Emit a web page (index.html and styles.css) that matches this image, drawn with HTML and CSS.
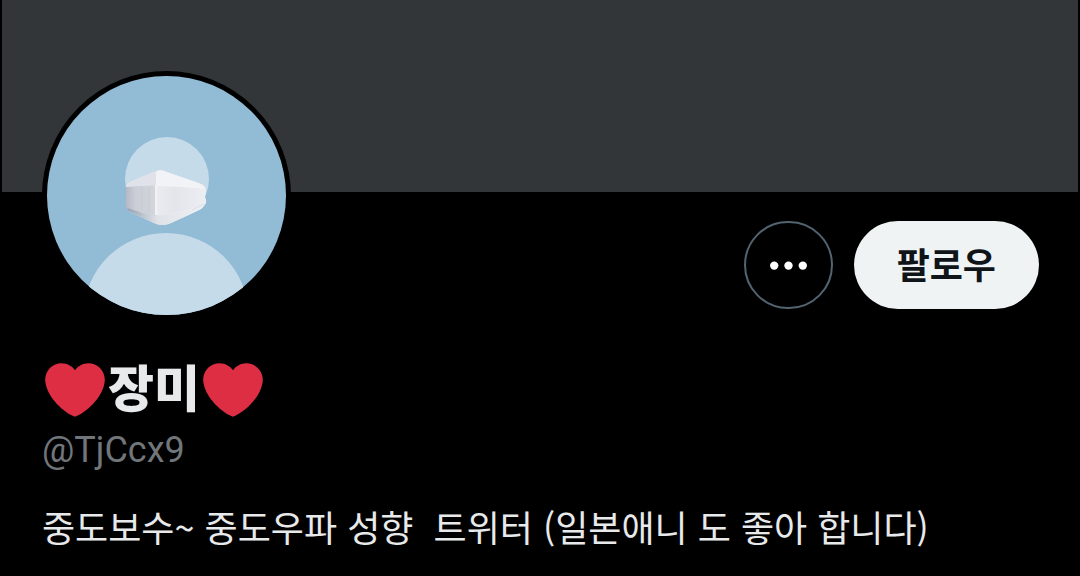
FILE: index.html
```html
<!DOCTYPE html>
<html lang="ko">
<head>
    <meta charset="UTF-8">
    <meta name="viewport" content="width=device-width, initial-scale=1.0">
    <title>장미 (@TjCcx9)</title>
    <link rel="stylesheet" href="styles.css">
</head>
<body>
    <div class="banner"></div>
    <main class="profile">
        <div class="profile-top">
            <svg class="avatar" viewBox="0 0 239 239" role="img" aria-label="프로필 사진">
                <defs>
                    <linearGradient id="maskLeft" x1="0" y1="0" x2="1" y2="0">
                        <stop offset="0" stop-color="#b4b9c4"/>
                        <stop offset="0.3" stop-color="#cbced6"/>
                        <stop offset="1" stop-color="#d3d5dc"/>
                    </linearGradient>
                    <linearGradient id="maskRight" x1="0" y1="0" x2="1" y2="0">
                        <stop offset="0" stop-color="#ebecf0"/>
                        <stop offset="0.4" stop-color="#e3e5eb"/>
                        <stop offset="1" stop-color="#eceef2"/>
                    </linearGradient>
                    <linearGradient id="maskBottom" x1="0" y1="0" x2="1" y2="0">
                        <stop offset="0" stop-color="#93a1b0"/>
                        <stop offset="0.4" stop-color="#dfe2e7"/>
                        <stop offset="1" stop-color="#eef0f3"/>
                    </linearGradient>
                </defs>
                <rect width="239" height="239" fill="#92bbd6"/>
                <circle cx="120" cy="103" r="42" fill="#c5dbe9"/>
                <ellipse cx="119" cy="238" rx="82" ry="81" fill="#c5dbe9"/>
                <!-- mask -->
                <path d="M79 111Q80 107 85 105L107 96Q112 93 117 95L154 108Q160 110 159 116L158 121Q161 126 157 130Q155 133 150 135L124 147Q115 151 107 147L83 136Q79 134 79 129Z" fill="#eceef2"/>
                <path d="M79 129Q79 134 83 136L107 147Q115 151 124 147L150 135Q155 133 157 130L125 138L96 137Z" fill="url(#maskBottom)"/>
                <path d="M79 110L109 109V140L97 137L80 132Q79 130 79 128Z" fill="url(#maskLeft)"/>
                <path d="M109 109L150 112Q158 114 158 118V126Q158 130 152 131L127 137Q117 140 109 139Z" fill="url(#maskRight)"/>
                <path d="M79 111Q80 107 85 105L107 96Q110 94 113 94L109 109Z" fill="#dfe3e9"/>
                <path d="M109 96Q113 93 117 95L154 108L158 113L137 111L109 110Z" fill="#f2f3f6"/>
                <path d="M87 111V134M95 111V136M102 111V137" fill="none" stroke="#c8cbd3" stroke-width="1"/>
                <path d="M109 109V139" fill="none" stroke="#f2f2f5" stroke-width="2"/>
                <path d="M145 134L157 128" fill="none" stroke="#d9dee4" stroke-width="1"/>
            </svg>
            <div class="actions">
                <button type="button" class="more" aria-label="더 보기">
                    <svg class="dots" viewBox="0 0 37 10" aria-hidden="true">
                        <circle cx="4.2" cy="5.6" r="4.2"/>
                        <circle cx="18.5" cy="5.6" r="4.2"/>
                        <circle cx="32.8" cy="5.6" r="4.2"/>
                    </svg>
                </button>
                <button type="button" class="follow">팔로우</button>
            </div>
        </div>
        <h1 class="name">
            <svg class="heart" viewBox="0 0 36 36" aria-hidden="true"><path d="M35.885 11.833c0-5.45-4.418-9.868-9.867-9.868-3.308 0-6.227 1.633-8.018 4.129-1.791-2.496-4.71-4.129-8.017-4.129-5.45 0-9.868 4.417-9.868 9.868 0 .772.098 1.52.266 2.241C1.751 22.587 11.216 31.568 18 34.034c6.783-2.466 16.249-11.447 17.617-19.959.17-.721.268-1.469.268-2.242z"/></svg>
            <span>장미</span>
            <svg class="heart" viewBox="0 0 36 36" aria-hidden="true"><path d="M35.885 11.833c0-5.45-4.418-9.868-9.867-9.868-3.308 0-6.227 1.633-8.018 4.129-1.791-2.496-4.71-4.129-8.017-4.129-5.45 0-9.868 4.417-9.868 9.868 0 .772.098 1.52.266 2.241C1.751 22.587 11.216 31.568 18 34.034c6.783-2.466 16.249-11.447 17.617-19.959.17-.721.268-1.469.268-2.242z"/></svg>
        </h1>
        <p class="handle">@TjCcx9</p>
        <p class="bio">중도보수~ 중도우파 성향  트위터 (일본애니 도 좋아 합니다)</p>
    </main>
</body>
</html>
```
FILE: styles.css
```css
* {
    box-sizing: border-box;
}

body {
    margin: 0;
    background-color: #000;
    color: #e7e9ea;
    font-family: Roboto, "Noto Sans CJK KR", sans-serif;
    font-size: 36px;
}

.banner {
    height: 192px;
    margin: 0 2px;
    background-color: #333639;
}

.profile {
    padding: 0 41px 0 42px;
}

.profile-top {
    display: flex;
    justify-content: space-between;
    align-items: flex-end;
    margin-top: -121px;
}

.avatar {
    position: relative;
    width: 249px;
    height: 249px;
    border: 5px solid #000;
    border-radius: 50%;
    background-color: #000;
}

.actions {
    display: flex;
    gap: 21px;
    padding-bottom: 11px;
}

.more,
.follow {
    height: 88px;
    border-radius: 44px;
    font: inherit;
    cursor: pointer;
}

.more {
    display: flex;
    align-items: center;
    justify-content: center;
    width: 89px;
    padding: 0;
    border: 2px solid #536471;
    background-color: #000;
}

.dots {
    width: 37px;
    height: 10px;
    fill: #fff;
}

.follow {
    padding: 0 43px 4px;
    border: none;
    background-color: #eff3f4;
    color: #0f1419;
    font-weight: bold;
}

.name {
    display: flex;
    align-items: center;
    height: 60px;
    margin: 40px 0 0;
    padding-left: 3px;
    gap: 3px;
    font-size: 50px;
    line-height: 60px;
    font-weight: 800;
}

.heart {
    width: 60px;
    height: 60px;
    fill: #dd2e44;
}

.handle {
    margin: 8px 0 0;
    color: #71767b;
    line-height: 44px;
}

.bio {
    margin: 28px 0 0;
    font-family: "Noto Sans CJK KR", sans-serif;
    line-height: 52px;
    white-space: pre-wrap;
}
```
